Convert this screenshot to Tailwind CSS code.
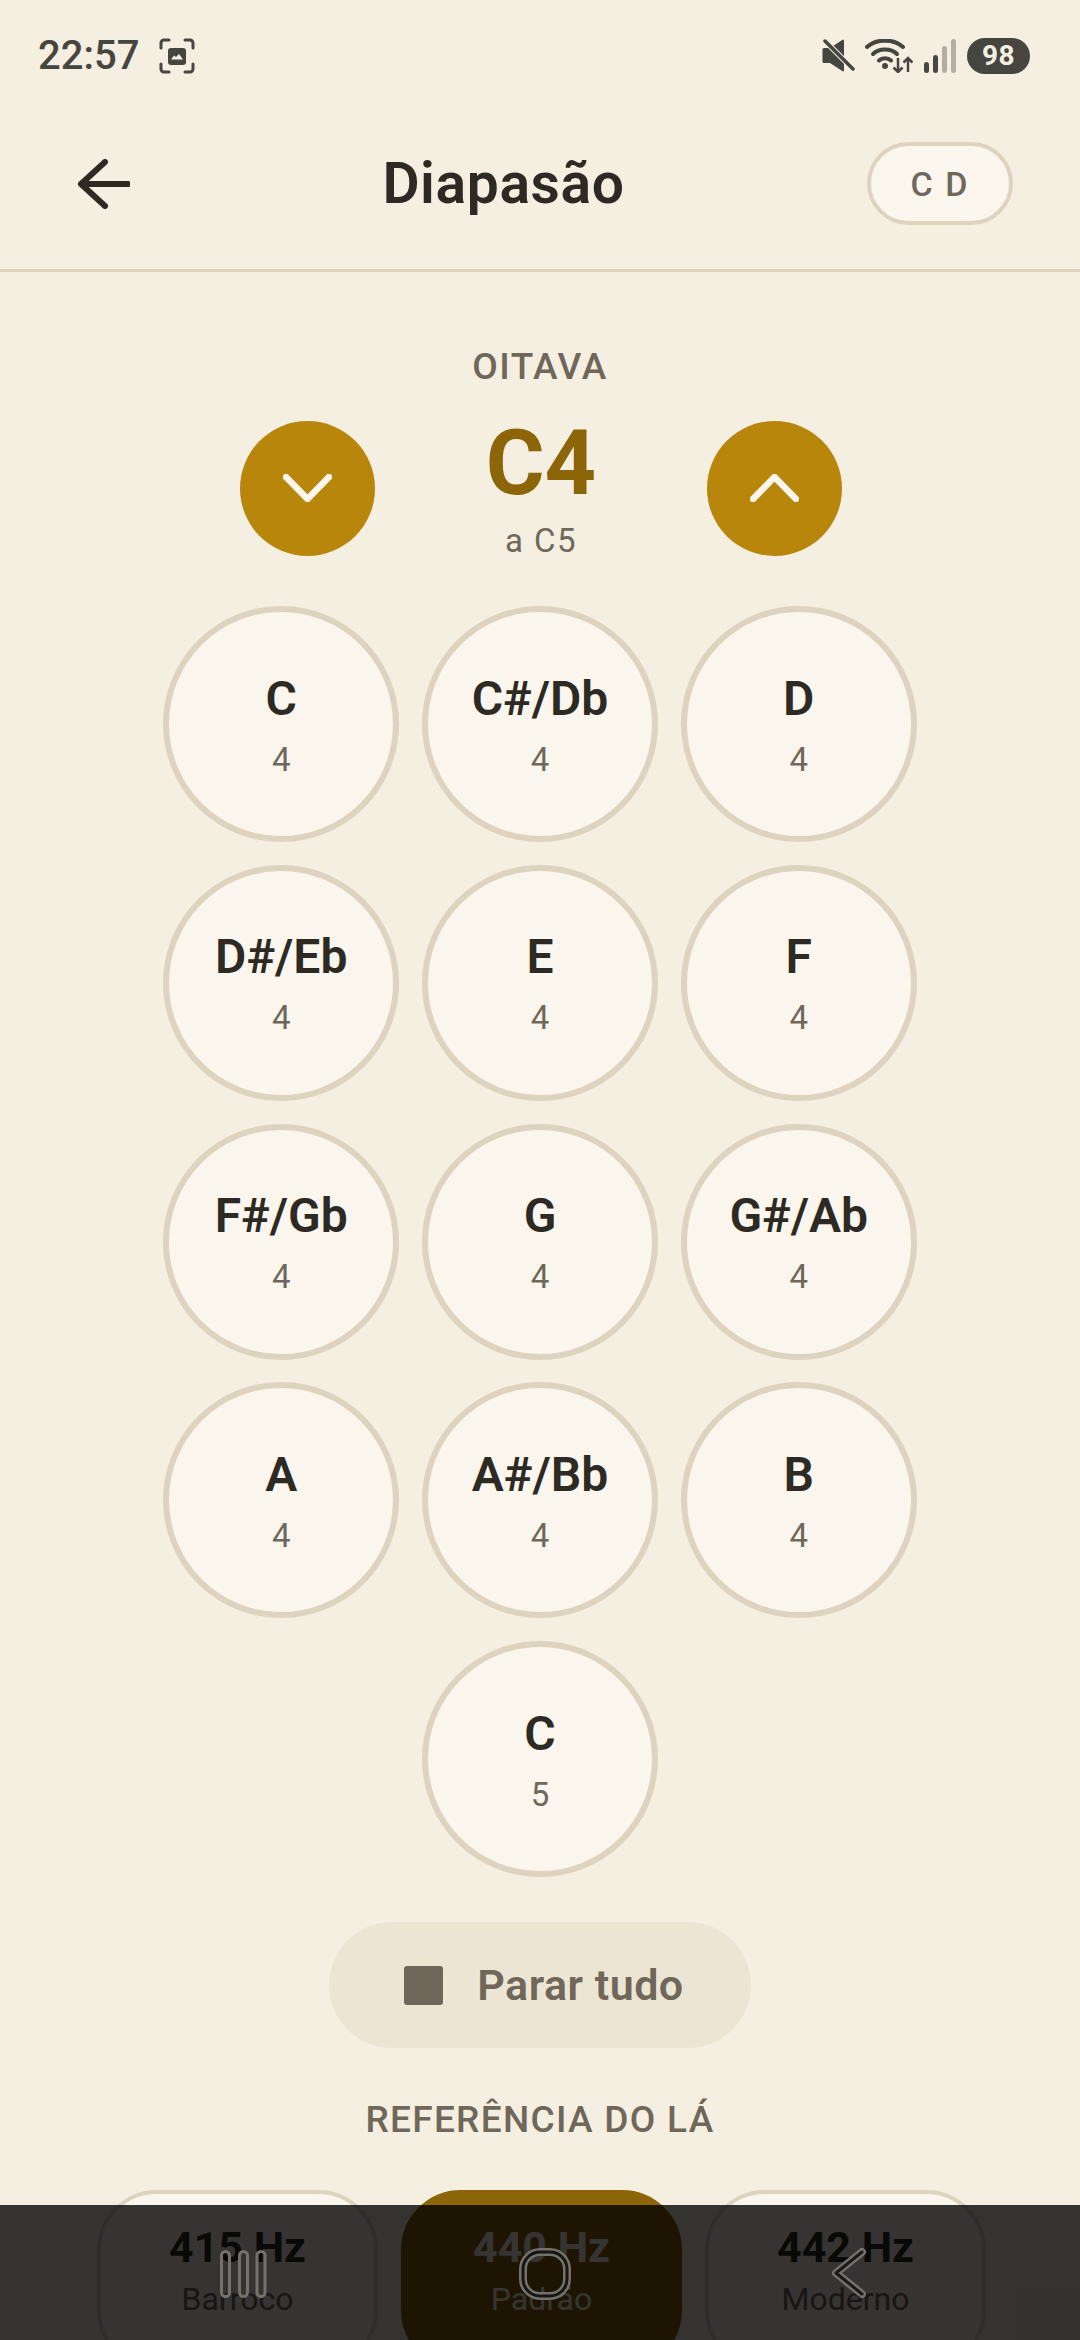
<!DOCTYPE html>
<html lang="pt">
<head>
  <meta charset="UTF-8">
  <meta name="viewport" content="width=device-width, initial-scale=1.0">
  <title>Diapasão</title>
  <script src="https://cdn.jsdelivr.net/npm/@tailwindcss/browser@4"></script>
</head>
<body class="bg-[#f4efe1] font-['Roboto',sans-serif] text-[#2d2a24]">
  <div class="relative w-[1080px] h-[2340px] overflow-hidden">

    <!-- Status bar -->
    <div class="h-[112px] flex items-center justify-between pl-[38px] pr-[50px] pb-[1px] text-[#474540]">
      <div class="flex items-center gap-[20px]">
        <span class="text-[40px] font-medium leading-none">22:57</span>
        <svg width="36" height="36" viewBox="0 0 36 36" fill="none">
          <path d="M2 10V5a3 3 0 0 1 3-3h5M26 2h5a3 3 0 0 1 3 3v5M34 26v5a3 3 0 0 1-3 3h-5M10 34H5a3 3 0 0 1-3-3v-5" stroke="#474540" stroke-width="3" stroke-linecap="round"/>
          <rect x="9" y="10" width="18" height="17" rx="3" fill="#474540"/>
          <path d="M12 21.500l3-4 2 1.500 3-3 4 5.500z" fill="#f4efe1"/>
        </svg>
      </div>
      <div class="flex items-center">
        <svg width="33" height="33" viewBox="0 0 33 33" class="mr-[10px]">
          <path d="M2 9h6l13-8.500a1 1 0 0 1 1 1v30a1 1 0 0 1-1 1L8 24H2a1.500 1.500 0 0 1-1.500-1.500v-12A1.500 1.500 0 0 1 2 9z" fill="#474540"/>
          <path d="M3 2l28 28" stroke="#f4efe1" stroke-width="5.500"/>
          <path d="M3 2l28 28" stroke="#474540" stroke-width="3.500" stroke-linecap="round"/>
        </svg>
        <svg width="48" height="34" viewBox="0 0 48 34" fill="none" class="mr-[11px]">
          <path d="M2 8C11-0.500 29-0.500 38 8" stroke="#474540" stroke-width="4" stroke-linecap="round"/>
          <path d="M8 15C14 9 26 9 32 15" stroke="#474540" stroke-width="4" stroke-linecap="round"/>
          <path d="M14 21.500C17 18.500 23 18.500 26 21.500" stroke="#474540" stroke-width="4" stroke-linecap="round"/>
          <circle cx="20" cy="27" r="3" fill="#474540"/>
          <path d="M33 19v14M28.500 28.500l4.500 4.500 4.500-4.500M43 33V19M38.500 23.500l4.500-4.500 4.500 4.500" stroke="#474540" stroke-width="2.500"/>
        </svg>
        <svg width="32" height="34" viewBox="0 0 32 34" class="mr-[11px]">
          <rect x="0" y="23" width="5" height="11" rx="2.500" fill="#474540"/>
          <rect x="9" y="16" width="5" height="18" rx="2.500" fill="#474540"/>
          <rect x="18" y="7" width="5" height="27" rx="2.500" fill="#b2aea3"/>
          <rect x="27" y="0" width="5" height="34" rx="2.500" fill="#b2aea3"/>
        </svg>
        <span class="w-[63px] h-[36px] rounded-full bg-[#474540] text-[#f4efe1] text-[28px] font-bold leading-none tracking-[0.5px] flex items-center justify-center">98</span>
      </div>
    </div>

    <!-- Top app bar -->
    <div class="h-[160px] flex items-center justify-between border-b-[3px] border-[#ddd3bf] pl-[76px] pr-[67px] pb-[14px]">
      <svg width="54" height="50" viewBox="0 0 54 50" fill="none">
        <path d="M52 25H5M29 3L5 25l24 22" stroke="#2d2a24" stroke-width="6" stroke-linecap="round" stroke-linejoin="round"/>
      </svg>
      <h1 class="text-[57px] font-semibold leading-none ml-[10px] tracking-[0.6px]">Diapasão</h1>
      <button class="w-[146px] h-[83px] rounded-full bg-[#faf6ed] border-[4px] border-[#ddd3bf] text-[34px] font-medium text-[#6f675a] tracking-[2px] leading-none">C D</button>
    </div>

    <!-- Octave -->
    <div class="flex flex-col items-center">
      <p class="mt-[76px] text-[37px] font-medium leading-none tracking-[1.5px] text-[#6f675a]">OITAVA</p>
      <div class="mt-[34px] ml-[2px] w-[602px] flex items-center justify-between">
        <button class="w-[135px] h-[135px] rounded-full bg-[#b8860b] flex items-center justify-center">
          <svg width="49" height="28" viewBox="0 0 49 28" fill="none"><path d="M3 3l21.500 22L46 3" stroke="#faf6ed" stroke-width="6.500" stroke-linecap="round" stroke-linejoin="round"/></svg>
        </button>
        <div class="flex flex-col items-center">
          <span class="text-[90px] font-bold leading-none text-[#8b6508]">C4</span>
          <span class="mt-[15px] text-[33px] leading-none tracking-[1.5px] text-[#6f675a]">a C5</span>
        </div>
        <button class="w-[135px] h-[135px] rounded-full bg-[#b8860b] flex items-center justify-center">
          <svg width="49" height="28" viewBox="0 0 49 28" fill="none"><path d="M3 25L24.500 3 46 25" stroke="#faf6ed" stroke-width="6.500" stroke-linecap="round" stroke-linejoin="round"/></svg>
        </button>
      </div>

      <!-- Notes -->
      <div class="mt-[49px] grid grid-cols-[236px_236px_236px] gap-[22.75px]">
        <button class="w-[236px] h-[236px] pt-[2px] rounded-full bg-[#faf6ed] border-[6px] border-[#ddd3bf] flex flex-col items-center justify-center"><span class="text-[48px] font-semibold leading-none">C</span><span class="mt-[20px] text-[33px] leading-none text-[#6f675a]">4</span></button>
        <button class="w-[236px] h-[236px] pt-[2px] rounded-full bg-[#faf6ed] border-[6px] border-[#ddd3bf] flex flex-col items-center justify-center"><span class="text-[48px] font-semibold leading-none">C#/Db</span><span class="mt-[20px] text-[33px] leading-none text-[#6f675a]">4</span></button>
        <button class="w-[236px] h-[236px] pt-[2px] rounded-full bg-[#faf6ed] border-[6px] border-[#ddd3bf] flex flex-col items-center justify-center"><span class="text-[48px] font-semibold leading-none">D</span><span class="mt-[20px] text-[33px] leading-none text-[#6f675a]">4</span></button>
        <button class="w-[236px] h-[236px] pt-[2px] rounded-full bg-[#faf6ed] border-[6px] border-[#ddd3bf] flex flex-col items-center justify-center"><span class="text-[48px] font-semibold leading-none">D#/Eb</span><span class="mt-[20px] text-[33px] leading-none text-[#6f675a]">4</span></button>
        <button class="w-[236px] h-[236px] pt-[2px] rounded-full bg-[#faf6ed] border-[6px] border-[#ddd3bf] flex flex-col items-center justify-center"><span class="text-[48px] font-semibold leading-none">E</span><span class="mt-[20px] text-[33px] leading-none text-[#6f675a]">4</span></button>
        <button class="w-[236px] h-[236px] pt-[2px] rounded-full bg-[#faf6ed] border-[6px] border-[#ddd3bf] flex flex-col items-center justify-center"><span class="text-[48px] font-semibold leading-none">F</span><span class="mt-[20px] text-[33px] leading-none text-[#6f675a]">4</span></button>
        <button class="w-[236px] h-[236px] pt-[2px] rounded-full bg-[#faf6ed] border-[6px] border-[#ddd3bf] flex flex-col items-center justify-center"><span class="text-[48px] font-semibold leading-none">F#/Gb</span><span class="mt-[20px] text-[33px] leading-none text-[#6f675a]">4</span></button>
        <button class="w-[236px] h-[236px] pt-[2px] rounded-full bg-[#faf6ed] border-[6px] border-[#ddd3bf] flex flex-col items-center justify-center"><span class="text-[48px] font-semibold leading-none">G</span><span class="mt-[20px] text-[33px] leading-none text-[#6f675a]">4</span></button>
        <button class="w-[236px] h-[236px] pt-[2px] rounded-full bg-[#faf6ed] border-[6px] border-[#ddd3bf] flex flex-col items-center justify-center"><span class="text-[48px] font-semibold leading-none">G#/Ab</span><span class="mt-[20px] text-[33px] leading-none text-[#6f675a]">4</span></button>
        <button class="w-[236px] h-[236px] pt-[2px] rounded-full bg-[#faf6ed] border-[6px] border-[#ddd3bf] flex flex-col items-center justify-center"><span class="text-[48px] font-semibold leading-none">A</span><span class="mt-[20px] text-[33px] leading-none text-[#6f675a]">4</span></button>
        <button class="w-[236px] h-[236px] pt-[2px] rounded-full bg-[#faf6ed] border-[6px] border-[#ddd3bf] flex flex-col items-center justify-center"><span class="text-[48px] font-semibold leading-none">A#/Bb</span><span class="mt-[20px] text-[33px] leading-none text-[#6f675a]">4</span></button>
        <button class="w-[236px] h-[236px] pt-[2px] rounded-full bg-[#faf6ed] border-[6px] border-[#ddd3bf] flex flex-col items-center justify-center"><span class="text-[48px] font-semibold leading-none">B</span><span class="mt-[20px] text-[33px] leading-none text-[#6f675a]">4</span></button>
        <button class="col-start-2 w-[236px] h-[236px] pt-[2px] rounded-full bg-[#faf6ed] border-[6px] border-[#ddd3bf] flex flex-col items-center justify-center"><span class="text-[48px] font-semibold leading-none">C</span><span class="mt-[20px] text-[33px] leading-none text-[#6f675a]">5</span></button>
      </div>

      <!-- Stop -->
      <button class="mt-[45px] w-[422px] h-[126px] pl-[8px] rounded-full bg-[#ede5d4] flex items-center justify-center gap-[34px] text-[#6f675a]">
        <span class="w-[39px] h-[39px] rounded-[3px] bg-[#6f675a]"></span>
        <span class="text-[43px] font-semibold leading-none tracking-[0.5px]">Parar tudo</span>
      </button>

      <!-- Reference pitch -->
      <p class="mt-[53px] text-[37px] font-medium leading-none tracking-[1.3px] text-[#6f675a]">REFERÊNCIA DO LÁ</p>
      <div class="mt-[52px] ml-[3px] flex gap-[22.5px]">
        <button class="w-[281.500px] h-[180px] rounded-[60px] bg-[#faf6ed] border-[4px] border-[#ddd3bf] flex flex-col items-center pt-[32px]"><span class="text-[43px] font-bold leading-none">415 Hz</span><span class="mt-[14px] text-[32px] leading-none text-[#6f675a]">Barroco</span></button>
        <button class="w-[281.500px] h-[180px] rounded-[60px] bg-[#8b6508] border-[4px] border-[#8b6508] flex flex-col items-center pt-[32px] text-[#faf6ed]"><span class="text-[43px] font-bold leading-none">440 Hz</span><span class="mt-[14px] text-[32px] leading-none">Padrão</span></button>
        <button class="w-[281.500px] h-[180px] rounded-[60px] bg-[#faf6ed] border-[4px] border-[#ddd3bf] flex flex-col items-center pt-[32px]"><span class="text-[43px] font-bold leading-none">442 Hz</span><span class="mt-[14px] text-[32px] leading-none text-[#6f675a]">Moderno</span></button>
      </div>
    </div>

    <!-- Navigation bar overlay -->
    <div class="absolute left-0 right-0 bottom-0 h-[135px] bg-black/[0.79]">
      <svg class="absolute left-[220px] top-[45px]" width="47" height="48" viewBox="0 0 47 48" fill="none">
        <rect x="1.500" y="1.500" width="8" height="45" rx="4" stroke="#75726b" stroke-width="3"/>
        <rect x="19.500" y="1.500" width="8" height="45" rx="4" stroke="#75726b" stroke-width="3"/>
        <rect x="37" y="1.500" width="8" height="45" rx="4" stroke="#75726b" stroke-width="3"/>
      </svg>
      <svg class="absolute left-[519px] top-[43px]" width="52" height="52" viewBox="0 0 52 52" fill="none">
        <rect x="4" y="4" width="44" height="44" rx="17" stroke="#75726b" stroke-width="8"/>
        <rect x="4" y="4" width="44" height="44" rx="17" stroke="#151515" stroke-width="3"/>
      </svg>
      <svg class="absolute left-[830px] top-[42px]" width="37" height="52" viewBox="0 0 37 52" fill="none">
        <path d="M32 5L6 26l26 21" stroke="#75726b" stroke-width="8" stroke-linecap="round" stroke-linejoin="round"/>
        <path d="M32 5L6 26l26 21" stroke="#1a1a1a" stroke-width="3" stroke-linecap="round" stroke-linejoin="round"/>
      </svg>
    </div>
  </div>
</body>
</html>
